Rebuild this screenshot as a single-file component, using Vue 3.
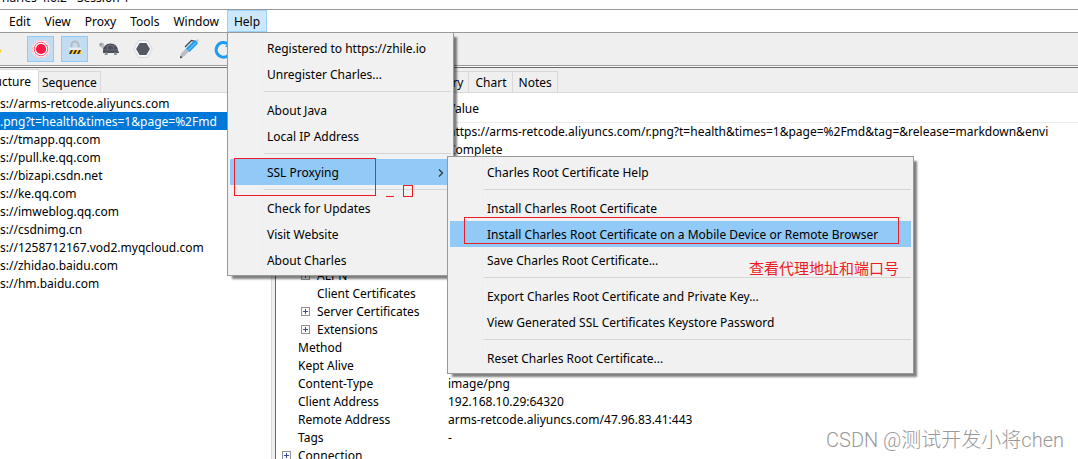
<script setup>
const menus = ['Edit', 'View', 'Proxy', 'Tools', 'Window']

const helpMenu = [
  ['Registered to https://zhile.io', 'Unregister Charles...'],
  ['About Java', 'Local IP Address'],
  ['SSL Proxying'],
  ['Check for Updates', 'Visit Website', 'About Charles'],
]

const sslMenu = [
  ['Charles Root Certificate Help'],
  [
    'Install Charles Root Certificate',
    'Install Charles Root Certificate on a Mobile Device or Remote Browser',
    'Save Charles Root Certificate...',
  ],
  ['Export Charles Root Certificate and Private Key...', 'View Generated SSL Certificates Keystore Password'],
  ['Reset Charles Root Certificate...'],
]
const activeSsl = sslMenu[1][1]

const hosts = [
  's://arms-retcode.aliyuncs.com',
  '.png?t=health&times=1&page=%2Fmd',
  's://tmapp.qq.com',
  's://pull.ke.qq.com',
  's://bizapi.csdn.net',
  's://ke.qq.com',
  's://imweblog.qq.com',
  's://csdnimg.cn',
  's://1258712167.vod2.myqcloud.com',
  's://zhidao.baidu.com',
  's://hm.baidu.com',
]

const tabs = ['Overview', 'Contents', 'Summary', 'Chart', 'Notes']

const details = [
  { value: 'https://arms-retcode.aliyuncs.com/r.png?t=health&times=1&page=%2Fmd&tag=&release=markdown&envi' },
  { value: 'Complete' },
  {},
  {},
  {},
  {},
  {},
  {},
  { name: 'ALPN', level: 2, open: true },
  { name: 'Client Certificates', level: 2 },
  { name: 'Server Certificates', level: 2, open: true },
  { name: 'Extensions', level: 2, open: true },
  { name: 'Method' },
  { name: 'Kept Alive' },
  { name: 'Content-Type', value: 'image/png' },
  { name: 'Client Address', value: '192.168.10.29:64320' },
  { name: 'Remote Address', value: 'arms-retcode.aliyuncs.com/47.96.83.41:443' },
  { name: 'Tags', value: '-' },
  { name: 'Connection', open: true },
]
</script>

<template>
  <div class="app">
    <header class="title"><span>harles 4.6.2 - Session 1</span></header>

    <nav class="menubar">
      <button v-for="m in menus" :key="m" type="button" class="menu">{{ m }}</button>
      <div class="menu-host">
        <button type="button" class="menu open" aria-haspopup="menu" aria-expanded="true">Help</button>
        <div class="popup help" role="menu">
          <div v-for="(group, g) in helpMenu" :key="g" class="group">
            <div v-for="item in group" :key="item" class="item-host">
              <button type="button" role="menuitem" class="item" :class="{ active: item === 'SSL Proxying' }">
                {{ item }}
                <svg v-if="item === 'SSL Proxying'" class="chevron" viewBox="0 0 6 8" aria-hidden="true">
                  <path d="M1 0.5 L4.5 4 L1 7.5" fill="none" stroke="#333" stroke-width="1.2" />
                </svg>
              </button>
              <div v-if="item === 'SSL Proxying'" class="popup ssl" role="menu">
                <div v-for="(sub, s) in sslMenu" :key="s" class="group">
                  <button v-for="entry in sub" :key="entry" type="button" role="menuitem" class="item" :class="{ active: entry === activeSsl }">{{ entry }}</button>
                </div>
              </div>
            </div>
          </div>
        </div>
      </div>
    </nav>

    <div class="toolbar">
      <svg class="broom" viewBox="0 0 3 27" aria-hidden="true"><path d="M0 14 L2 13 L1 16 L0 17Z" fill="#ffcf24" /></svg>
      <button type="button" class="tool on" aria-label="Record">
        <svg viewBox="0 0 24 24">
          <circle cx="12" cy="12" r="9.3" fill="#fff" />
          <circle cx="12" cy="12" r="8.6" fill="none" stroke="#f6a9b7" stroke-width="0.8" />
          <circle cx="12" cy="12" r="6.8" fill="none" stroke="#f5506b" stroke-width="1" />
          <circle cx="12" cy="12" r="5.1" fill="#ff1744" />
        </svg>
      </button>
      <button type="button" class="tool on" aria-label="SSL proxying">
        <svg viewBox="0 0 24 24">
          <path d="M8.4 12 V8.5 A3.6 3.9 0 0 1 15.6 8.5 V12" fill="none" stroke="#b6bac4" stroke-width="2" />
          <rect x="6" y="10.5" width="12" height="3.5" fill="#ececf0" />
          <rect x="6" y="13" width="12" height="4" fill="#ffc928" />
          <path d="M6 17 L8 13 H10 L8 17Z M10 17 L12 13 H14 L12 17Z M14 17 L16 13 H18 L16 17Z" fill="#2e3038" />
        </svg>
      </button>
      <button type="button" class="tool" aria-label="Throttling">
        <svg viewBox="0 0 24 24">
          <path d="M2 8 Q2 5.5 4.5 5.5 Q7 5.5 7 8 L9 13 L11 15 H7 Q6 13 5 10.5 L3 10Z" fill="#b7bac5" />
          <path d="M6 14 Q6.500 6.500 13.500 6.500 Q20.500 6.500 21 14 L22 15 V16 H6Z" fill="#4b4d59" />
          <path d="M9 9.500 L13 8 L18 9.500 M7.500 13 H20 M11 9 L10 13 M16 9 L17 13" fill="none" stroke="#7c7e89" stroke-width="0.7" />
          <path d="M8 15.500 H11 L10.500 18 H7.500Z M17 15.500 H20 V18 H17Z" fill="#92959f" />
          <circle cx="3.8" cy="7.5" r="0.6" fill="#444" />
        </svg>
      </button>
      <button type="button" class="tool" aria-label="Breakpoints">
        <svg viewBox="0 0 24 24">
          <path d="M7.500 3.600 H16.500 L21.200 12 L16.500 20.400 H7.500 L2.800 12Z" fill="#f8f8fb" stroke="#cfd1da" stroke-width="0.9" />
          <path d="M8.600 6 H15.400 L18.900 12 L15.400 18 H8.600 L5.100 12Z" fill="#555863" />
        </svg>
      </button>
      <button type="button" class="tool spaced" aria-label="Compose">
        <svg viewBox="0 0 24 24">
          <path d="M3 21.500 L4 16.500 L10 10.500 L13 13.500 L7.500 19Z" fill="#b9bcc9" />
          <path d="M3 21.500 L3.600 18.700 L5.500 20.200Z" fill="#34353d" />
          <path d="M9 11.500 L17 3.500 Q21.500 2.500 20.500 7 L12.500 15Z" fill="#1e9bf5" />
          <path d="M11.500 13 L19 5.500" stroke="#64c1ff" stroke-width="1.300" />
          <path d="M8 10 L14.500 3.500 L17 4" fill="none" stroke="#3d4049" stroke-width="1.200" />
          <path d="M18.500 3.500 L21 2 L22 3.500 L20.500 5.500Z" fill="#c8cad4" />
        </svg>
      </button>
      <button type="button" class="tool" aria-label="Repeat">
        <svg viewBox="0 0 24 24">
          <path d="M17.500 7.500 A7.300 7.300 0 1 0 19.800 13" fill="none" stroke="#1e9bf5" stroke-width="3" />
          <path d="M20.500 3 V10 H14Z" fill="#1e9bf5" />
        </svg>
      </button>
    </div>

    <main class="panes">
      <section class="left">
        <div class="tabs" role="tablist">
          <button type="button" role="tab" aria-selected="true" class="tab current">Structure</button>
          <button type="button" role="tab" aria-selected="false" class="tab">Sequence</button>
        </div>
        <ul class="tree">
          <li v-for="(h, i) in hosts" :key="h" :class="{ selected: i === 1 }">{{ h }}</li>
        </ul>
      </section>

      <section class="right">
        <div class="tabs" role="tablist">
          <button v-for="t in tabs" :key="t" type="button" role="tab" class="tab">{{ t }}</button>
        </div>
        <div class="sheet">
          <table>
            <colgroup><col class="name-col" /><col /></colgroup>
            <thead>
              <tr><th></th><th>Value</th></tr>
            </thead>
            <tbody>
              <tr v-for="(d, i) in details" :key="i">
                <td class="name" :class="{ nested: d.level === 2 }">
                  <span class="knob"><svg v-if="d.open" viewBox="0 0 9 9" aria-hidden="true">
                    <rect x="0.5" y="0.5" width="8" height="8" fill="#fafafa" stroke="#919191" />
                    <path d="M2 4.500 H7 M4.500 2 V7" stroke="#3b4c92" />
                  </svg></span>{{ d.name }}
                </td>
                <td>{{ d.value }}</td>
              </tr>
            </tbody>
          </table>
        </div>
      </section>
    </main>

    <div class="mark box-proxying"></div>
    <div class="mark dash"></div>
    <div class="mark square"></div>
    <div class="mark box-install"></div>
    <p class="note">查看代理地址和端口号</p>
    <p class="watermark">CSDN @测试开发小将chen</p>
  </div>
</template>

<style>
body {
  margin: 0;
}
</style>

<style scoped>
.app {
  position: relative;
  display: flex;
  flex-direction: column;
  height: 100vh;
  overflow: hidden;
  background: #fff;
  color: #000;
  font-family: "Noto Sans", "Noto Sans CJK SC", sans-serif;
  font-size: 12px;
  line-height: 18px;
  white-space: nowrap;
}
button {
  margin: 0;
  padding: 0;
  border: 0;
  background: none;
  color: inherit;
  font: inherit;
  white-space: nowrap;
}
.title {
  display: flex;
  align-items: flex-end;
  flex: none;
  height: 9px;
  padding-left: 2px;
  border-bottom: 1px solid #999;
  overflow: hidden;
}
.title span {
  margin-bottom: 2px;
}
.menubar {
  display: flex;
  gap: 2px;
  flex: none;
  height: 22px;
  padding-left: 3px;
  border-bottom: 1px solid #999;
}
.menu {
  box-sizing: border-box;
  height: 22px;
  padding: 2px 6px 0;
  border: 1px solid transparent;
  border-width: 1px 0;
}
.menu-host {
  position: relative;
}
.menu.open {
  border: 1px solid #99d1ff;
  background: #cce8ff;
}
.popup {
  position: absolute;
  z-index: 2;
  padding: 2px;
  border: 1px solid #999;
  background: linear-gradient(90deg, #f1f1f1 0 34px, #eeeeee 34px 35px, #f1f1f1 35px);
  box-shadow: 4px 4px 2px -1px rgba(0, 0, 0, 0.5);
}
.help {
  top: 22px;
  left: 0;
  width: 221px;
}
.ssl {
  top: -3px;
  left: 217px;
  width: 461px;
}
.group + .group::before {
  content: "";
  display: block;
  height: 1px;
  margin: 4px 0 5px 34px;
  background: #d5d5d5;
}
.item-host {
  position: relative;
}
.item {
  display: flex;
  align-items: center;
  justify-content: space-between;
  box-sizing: border-box;
  width: 100%;
  height: 26px;
  padding: 2px 7px 0 37px;
}
.item.active {
  background: #91c9f7;
}
.chevron {
  width: 6px;
  height: 8px;
}
.toolbar {
  display: flex;
  align-items: center;
  gap: 7px;
  flex: none;
  height: 32px;
  background: #efefef;
  border-bottom: 1px solid #999;
}
.broom {
  width: 3px;
  height: 27px;
  margin-right: 17px;
}
.tool {
  display: flex;
  align-items: center;
  justify-content: center;
  box-sizing: border-box;
  width: 27px;
  height: 26px;
}
.tool.on {
  border: 1px solid #91c9f7;
  background: #c2dcf2;
}
.tool.spaced {
  margin-left: 12px;
}
.tool svg {
  flex: none;
  width: 24px;
  height: 24px;
}
.panes {
  display: flex;
  flex: 1;
  min-height: 0;
  margin-top: 1px;
  border-top: 1px solid #696969;
  background: #efefef;
}
.left {
  flex: 0 0 271px;
  min-width: 0;
  display: flex;
  flex-direction: column;
  border-right: 1px solid #d9d9d9;
}
.right {
  flex: 1;
  min-width: 0;
  margin-left: 3px;
  display: flex;
  flex-direction: column;
  border-left: 1px solid #696969;
}
.tabs {
  display: flex;
  align-items: flex-end;
  flex: none;
  height: 25px;
  box-sizing: border-box;
  border-bottom: 1px solid #d9d9d9;
}
.tab {
  display: flex;
  align-items: center;
  box-sizing: border-box;
  height: 21px;
  padding: 2px 3px 0;
  border: 1px solid #d9d9d9;
  border-width: 1px 1px 0 0;
}
.right .tab {
  padding: 2px 5px 0 6px;
}
.tab.current {
  justify-content: flex-end;
  width: 39px;
  height: 24px;
  margin-bottom: -1px;
  padding: 0 7px 0 0;
  background: #fff;
}
.tree {
  flex: 1;
  margin: 0;
  padding: 1px 0 0;
  list-style: none;
  background: #fff;
  overflow: hidden;
}
.tree li {
  height: 18px;
  line-height: 20px;
}
.tree .selected {
  background: #0078d7;
  color: #fff;
}
.sheet {
  flex: 1;
  min-height: 0;
  overflow: hidden;
  background: #fff;
}
table {
  width: 100%;
  table-layout: fixed;
  border-collapse: collapse;
}
.name-col {
  width: 171px;
}
th {
  box-sizing: border-box;
  height: 29px;
  padding: 4px 0 0 1px;
  border-bottom: 1px solid #ececec;
  font-weight: 400;
  text-align: left;
}
td {
  height: 18px;
  padding: 0 0 0 1px;
  overflow: hidden;
}
.name {
  padding-left: 6px;
}
.name.nested {
  padding-left: 25px;
}
.knob {
  display: inline-block;
  width: 16px;
}
.knob svg {
  display: inline-block;
  width: 9px;
  height: 9px;
}
.mark {
  position: absolute;
  z-index: 3;
  box-sizing: border-box;
  border: 1px solid #ed1c24;
  pointer-events: none;
}
.box-proxying {
  top: 158px;
  left: 234px;
  width: 142px;
  height: 38px;
}
.dash {
  top: 196px;
  left: 386px;
  width: 8px;
  height: 0;
  border-width: 1px 0 0;
}
.square {
  top: 185px;
  left: 403px;
  width: 10px;
  height: 12px;
}
.box-install {
  top: 217px;
  left: 464px;
  width: 435px;
  height: 27px;
}
.note {
  position: absolute;
  z-index: 3;
  top: 257px;
  left: 749px;
  margin: 0;
  color: #ed1c24;
  font-family: "Noto Sans CJK SC", sans-serif;
  font-size: 15px;
  line-height: 22px;
}
.watermark {
  position: absolute;
  right: 14px;
  bottom: 6px;
  margin: 0;
  color: #999;
  font-family: Roboto, "Noto Sans CJK SC", sans-serif;
  font-size: 20px;
  font-weight: 300;
  line-height: 26px;
}
</style>
